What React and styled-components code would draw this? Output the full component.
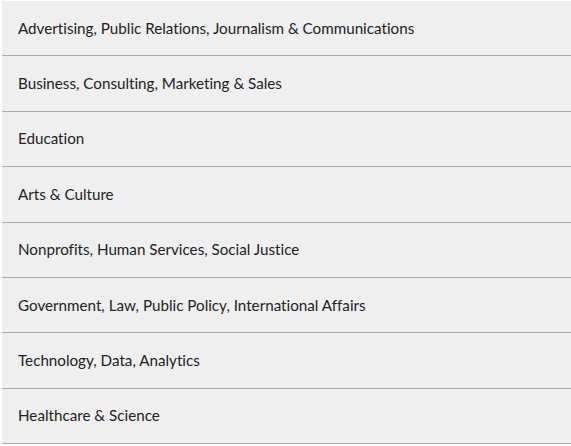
import React from "react";
import styled, { createGlobalStyle } from "styled-components";

const Global = createGlobalStyle`
  body { margin: 0; background: #fff; }
`;

const List = styled.ul`
  list-style: none;
  margin: 1px 0 0 2px;
  padding: 0;
  width: 569px;
  background: #efefef;
  font-family: Lato, "Noto Sans", sans-serif;
`;

const Item = styled.li`
  box-sizing: border-box;
  height: 55.375px;
  display: flex;
  align-items: center;
  padding: 0 0 1px 16px;
  border-bottom: 1px solid #a9a9a9;
  font-size: 15.2px;
  font-variant-ligatures: none;
  color: #222;
`;

const items = [
  "Advertising, Public Relations, Journalism & Communications",
  "Business, Consulting, Marketing & Sales",
  "Education",
  "Arts & Culture",
  "Nonprofits, Human Services, Social Justice",
  "Government, Law, Public Policy, International Affairs",
  "Technology, Data, Analytics",
  "Healthcare & Science",
];

export default function App() {
  return (
    <>
      <Global />
      <List>
        {items.map((t) => (
          <Item key={t}>{t}</Item>
        ))}
      </List>
    </>
  );
}
